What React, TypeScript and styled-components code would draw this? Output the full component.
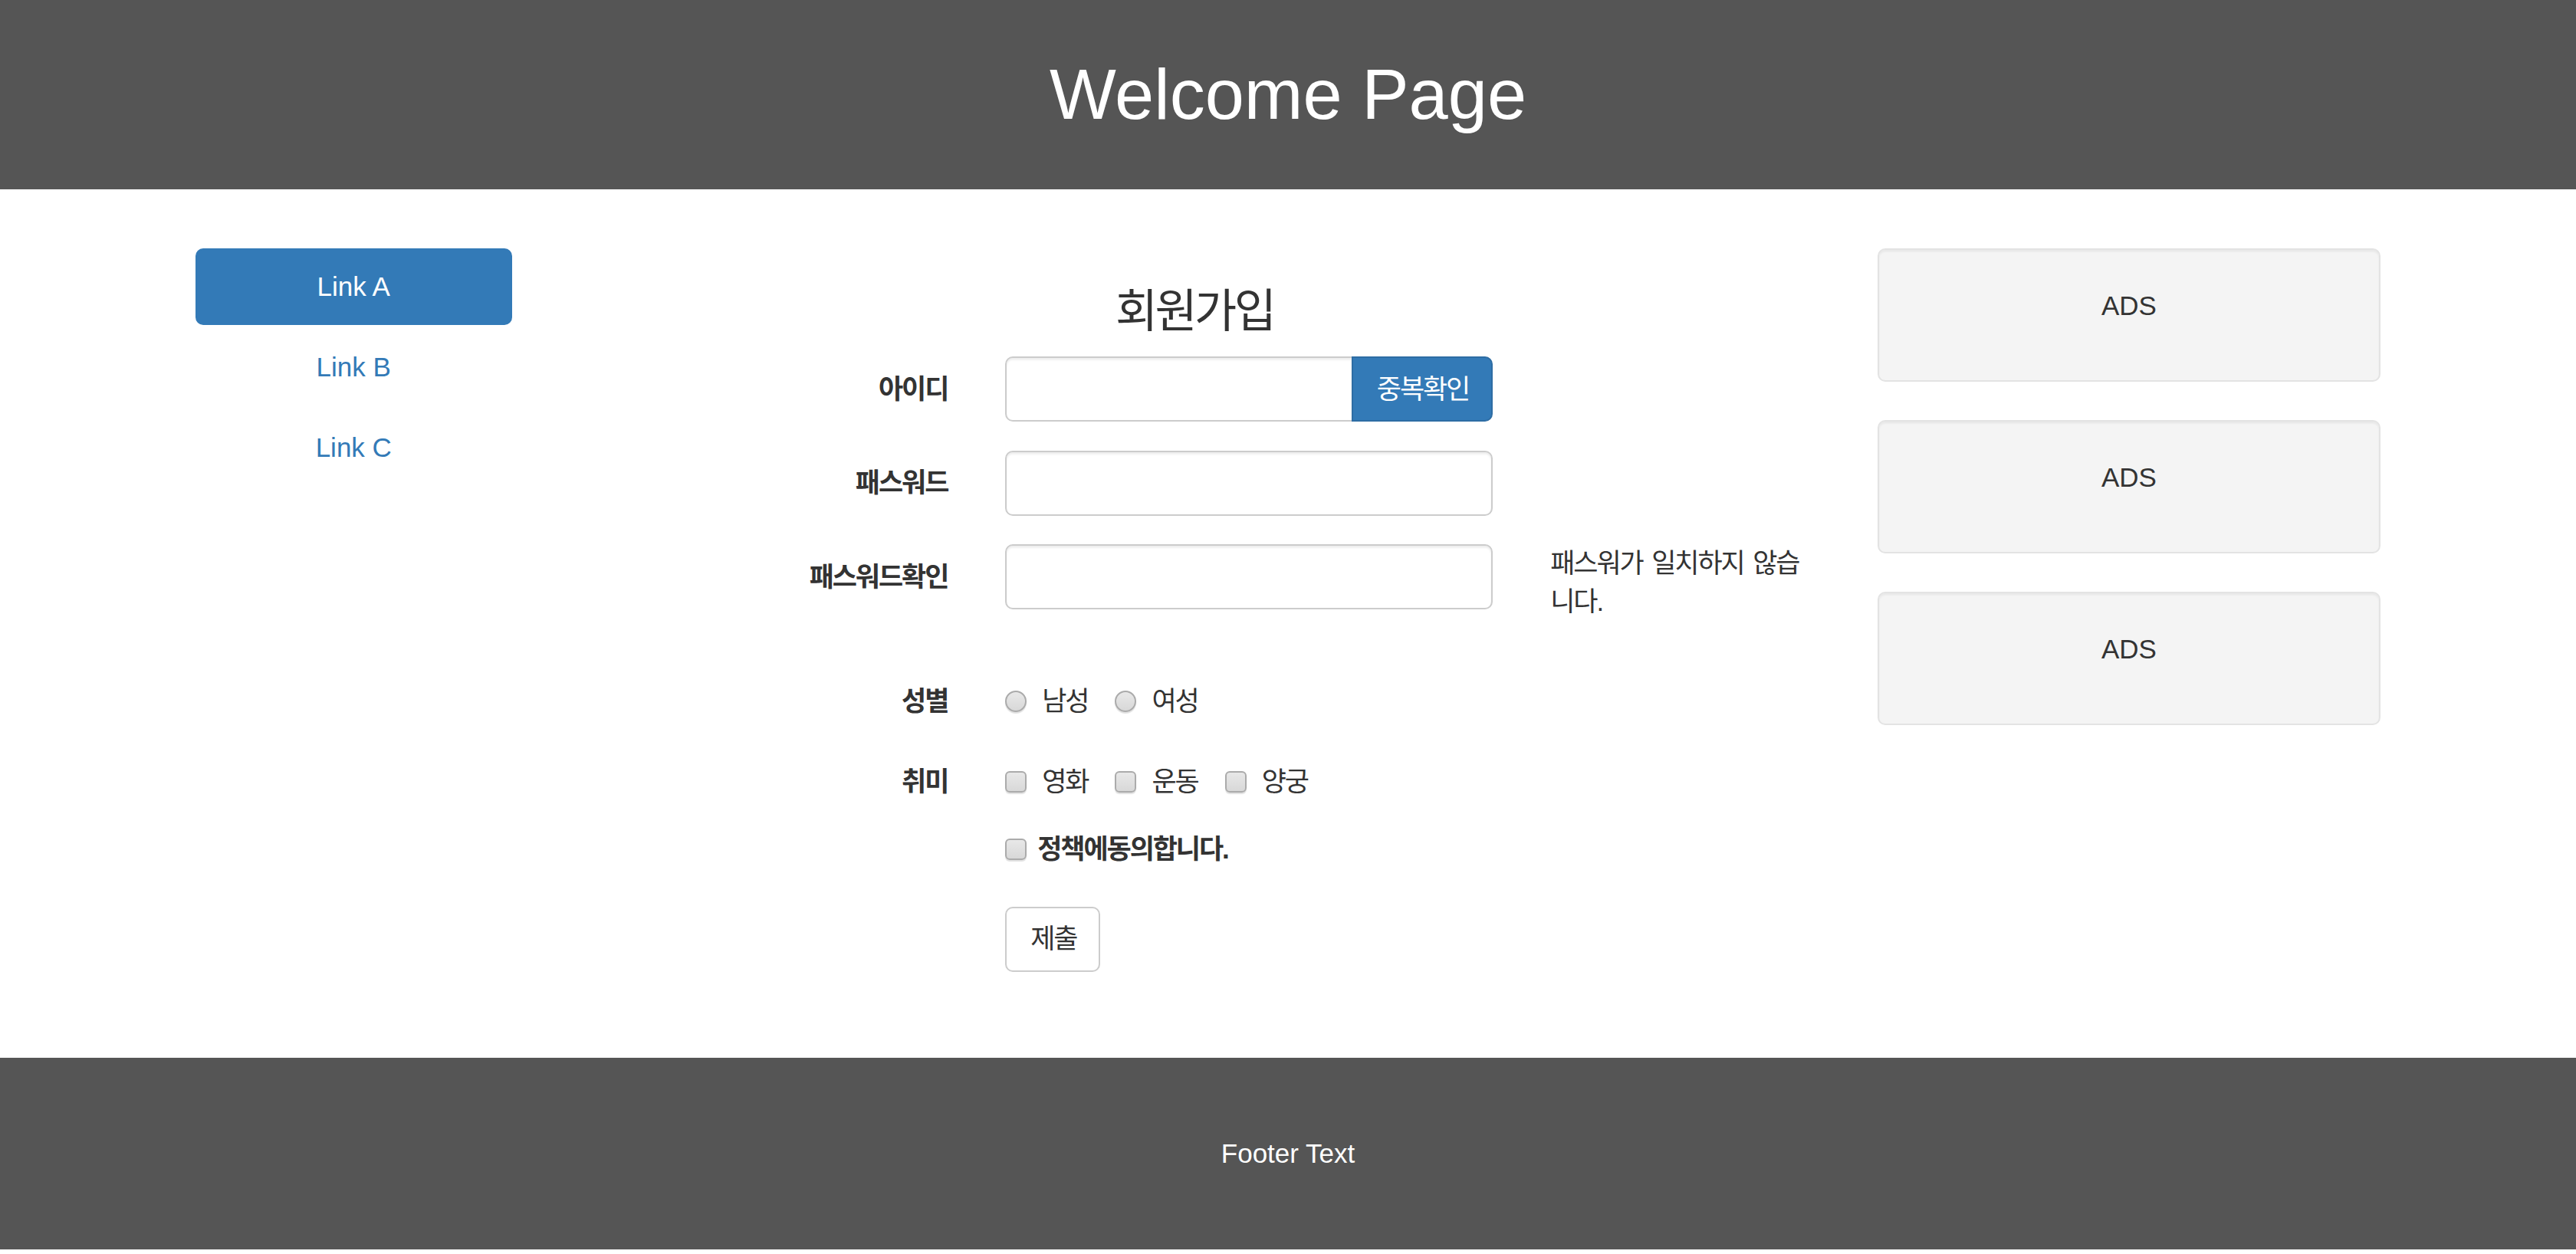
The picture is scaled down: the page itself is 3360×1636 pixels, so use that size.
import styled, { createGlobalStyle } from 'styled-components'

const GlobalStyle = createGlobalStyle`
    html, body {
        margin: 0;
        padding: 0;
        background: #fff;
    }
    body {
        font-family: "Liberation Sans", "Noto Sans CJK KR", sans-serif;
        font-size: 35px;
        line-height: 50px;
        color: #333;
    }
    * {
        box-sizing: border-box;
    }
`

const Header = styled.header`
    height: 247px;
    background-color: #555;
    display: flex;
    align-items: center;
    justify-content: center;
`

const HeaderTitle = styled.h1`
    margin: 0;
    color: #fff;
    font-size: 92px;
    font-weight: 400;
    line-height: 1.1;
`

const Main = styled.main`
    width: 2925px;
    margin: 0 auto;
    padding: 77px 0 75px;
    display: grid;
    grid-template-columns: 2fr 7fr 3fr;
`

const Column = styled.div`
    padding: 0 37.5px;
    min-width: 0;
`

const FormColumn = styled(Column)`
    letter-spacing: -0.06em;
`

// sidebar
const NavList = styled.nav`
    display: flex;
    flex-direction: column;
    gap: 5px;
`

const NavLink = styled.a<{ $active?: boolean }>`
    display: block;
    height: 100px;
    line-height: 100px;
    text-align: center;
    border-radius: 10px;
    text-decoration: none;
    color: ${p => (p.$active ? '#fff' : '#337ab7')};
    background-color: ${p => (p.$active ? '#337ab7' : 'transparent')};
`

// form
const FormTitle = styled.h3`
    margin: 50px 0 25px;
    font-size: 60px;
    line-height: 66px;
    font-weight: 400;
    text-align: center;
    letter-spacing: -0.06em;
`

const FormRow = styled.div<{ $space?: number }>`
    display: grid;
    grid-template-columns: 4fr 5fr 3fr;
    margin: 0 -37.5px ${p => p.$space ?? 37.5}px;
`

const Cell = styled.div<{ $col?: number }>`
    padding: 0 37.5px;
    min-width: 0;
    ${p => (p.$col ? `grid-column: ${p.$col} / span 1;` : '')}
`

const FieldLabel = styled.label`
    padding: 17.5px 37.5px 0;
    text-align: right;
    font-weight: 700;
`

const TextInput = styled.input`
    display: block;
    width: 100%;
    height: 85px;
    padding: 15px 30px;
    font: inherit;
    color: #555;
    background: #fff;
    border: 2px solid #ccc;
    border-radius: 10px;
    box-shadow: inset 0 2.5px 2.5px rgba(0, 0, 0, 0.075);
`

const InputGroup = styled.div`
    display: flex;
`

const GroupInput = styled(TextInput)`
    flex: 1;
    min-width: 0;
    border-radius: 10px 0 0 10px;
`

const CheckButton = styled.button`
    height: 85px;
    padding: 0 29px 0 31px;
    margin-left: -2px;
    font: inherit;
    letter-spacing: -0.06em;
    color: #fff;
    background-color: #337ab7;
    border: 2px solid #2e6da4;
    border-radius: 0 10px 10px 0;
`

const Hint = styled.p`
    margin: 0 0 25px;
    word-spacing: 4px;
`

const Options = styled.div<{ $inset?: boolean }>`
    display: flex;
    gap: 35px;
    padding-top: ${p => (p.$inset ? '17.5px' : '0')};
`

const Option = styled.label<{ $bold?: boolean }>`
    display: inline-flex;
    align-items: center;
    height: 50px;
    font-weight: ${p => (p.$bold ? 700 : 400)};
`

const Tick = styled.input<{ $round?: boolean; $tight?: boolean }>`
    appearance: none;
    flex: none;
    width: 28px;
    height: 28px;
    margin: 0 ${p => (p.$tight ? '14px' : '20px')} 0 0;
    border: 2px solid #ababab;
    border-radius: ${p => (p.$round ? '50%' : '6px')};
    background: linear-gradient(#e8e8e8, #d8d8d8);
    box-shadow: 0 2px 1px rgba(0, 0, 0, 0.12);
`

const SubmitButton = styled.button`
    height: 85px;
    padding: 0 29px 0 31px;
    font: inherit;
    letter-spacing: -0.06em;
    color: #333;
    background: #fff;
    border: 2px solid #ccc;
    border-radius: 10px;
`

// ads
const AdWell = styled.div`
    padding: 47.5px;
    margin-bottom: 50px;
    text-align: center;
    background-color: #f4f4f4;
    border: 2px solid #e3e3e3;
    border-radius: 10px;
    box-shadow: inset 0 2.5px 2.5px rgba(0, 0, 0, 0.05);
`

const AdText = styled.p`
    margin: 0 0 25px;
`

const Footer = styled.footer`
    height: 250px;
    background-color: #555;
    color: #fff;
    display: flex;
    align-items: center;
    justify-content: center;
`

const links = ['Link A', 'Link B', 'Link C']

export default function App() {
    return (
        <>
            <GlobalStyle />
            <Header>
                <HeaderTitle>Welcome Page</HeaderTitle>
            </Header>

            <Main>
                <Column>
                    <NavList>
                        {links.map((l, i) => (
                            <NavLink key={l} href="#" $active={i === 0}>{l}</NavLink>
                        ))}
                    </NavList>
                </Column>

                <FormColumn>
                    <FormTitle>회원가입</FormTitle>

                    <FormRow>
                        <FieldLabel>아이디</FieldLabel>
                        <Cell>
                            <InputGroup>
                                <GroupInput type="text" />
                                <CheckButton type="button">중복확인</CheckButton>
                            </InputGroup>
                        </Cell>
                    </FormRow>

                    <FormRow>
                        <FieldLabel>패스워드</FieldLabel>
                        <Cell>
                            <TextInput type="password" />
                        </Cell>
                    </FormRow>

                    <FormRow>
                        <FieldLabel>패스워드확인</FieldLabel>
                        <Cell>
                            <TextInput type="password" />
                        </Cell>
                        <Cell>
                            <Hint>패스워가 일치하지 않습니다.</Hint>
                        </Cell>
                    </FormRow>

                    <FormRow>
                        <FieldLabel>성별</FieldLabel>
                        <Cell>
                            <Options $inset>
                                <Option><Tick type="radio" name="gender" $round />남성</Option>
                                <Option><Tick type="radio" name="gender" $round />여성</Option>
                            </Options>
                        </Cell>
                    </FormRow>

                    <FormRow>
                        <FieldLabel>취미</FieldLabel>
                        <Cell>
                            <Options $inset>
                                <Option><Tick type="checkbox" />영화</Option>
                                <Option><Tick type="checkbox" />운동</Option>
                                <Option><Tick type="checkbox" />양궁</Option>
                            </Options>
                        </Cell>
                    </FormRow>

                    <FormRow $space={50}>
                        <Cell $col={2}>
                            <Options>
                                <Option $bold><Tick type="checkbox" $tight />정책에동의합니다.</Option>
                            </Options>
                        </Cell>
                    </FormRow>

                    <FormRow>
                        <Cell $col={2}>
                            <SubmitButton type="submit">제출</SubmitButton>
                        </Cell>
                    </FormRow>
                </FormColumn>

                <Column>
                    <AdWell><AdText>ADS</AdText></AdWell>
                    <AdWell><AdText>ADS</AdText></AdWell>
                    <AdWell><AdText>ADS</AdText></AdWell>
                </Column>
            </Main>

            <Footer>Footer Text</Footer>
        </>
    )
}
